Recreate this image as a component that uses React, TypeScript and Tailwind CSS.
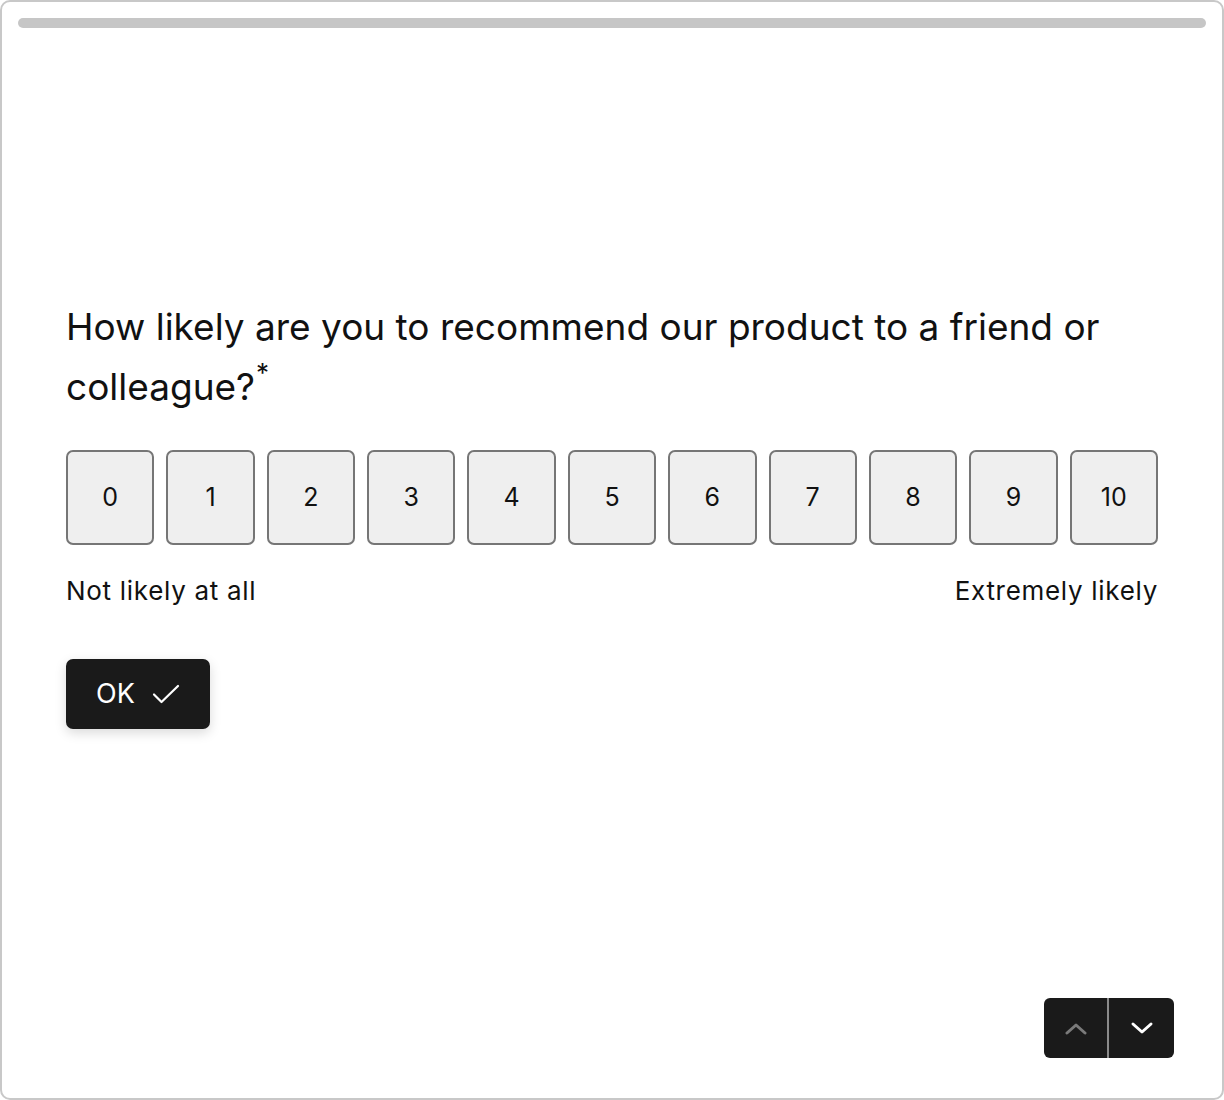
import React from "react";

const scores = [0, 1, 2, 3, 4, 5, 6, 7, 8, 9, 10];

export default function App() {
  return (
    <div
      className="w-[1224px] h-[1100px] bg-white"
      style={{ fontFamily: "Inter, 'Noto Sans', sans-serif" }}
    >
      <div className="h-full border-2 border-[#c8c8c8] rounded-[10px] flex flex-col px-4 pt-4 pb-[40px]">
        <div className="h-[10px] rounded-full bg-[#c6c6c6]" />

        <div className="flex-1 flex flex-col pl-[48px] pr-[48px] pt-[269px]">
          <h1 className="text-[37px] leading-[60px] text-[#111]">
            How likely are you to recommend our product to a friend or colleague?
            <span className="inline-block align-top text-[26px] leading-none relative top-[3px] ml-[1px]">
              *
            </span>
          </h1>

          <div className="mt-[33px] flex gap-3">
            {scores.map((n) => (
              <button
                key={n}
                className="flex-1 h-[95px] rounded-[7px] border-2 border-[#767676] bg-[#efefef] text-[25px] text-[#111] flex items-center justify-center"
              >
                {n}
              </button>
            ))}
          </div>

          <div className="mt-[30px] flex justify-between text-[26px] tracking-[0.7px] text-[#111] leading-[32px]">
            <span>Not likely at all</span>
            <span>Extremely likely</span>
          </div>

          <div className="mt-[52px]">
            <button className="h-[70px] pl-[30px] pr-[30px] rounded-[7px] bg-[#1a1a1a] text-white text-[27px] flex items-center gap-[17px] shadow-[0_4px_12px_rgba(0,0,0,0.15)]">
              OK
              <svg width="28" height="22" viewBox="0 0 28 22" fill="none">
                <path
                  d="M2 11.5 L9.5 19 L26 3"
                  stroke="white"
                  strokeWidth="2.2"
                  strokeLinecap="round"
                  strokeLinejoin="round"
                />
              </svg>
            </button>
          </div>
        </div>

        <div className="flex justify-end pr-[32px]">
          <div className="flex h-[60px] rounded-[6px] bg-[#1a1a1a] overflow-hidden">
            <button className="w-[65px] flex items-center justify-center border-r-2 border-[#8a8a8a]">
              <svg width="24" height="14" viewBox="0 0 24 14" fill="none">
                <path
                  d="M3 12 L12 4 L21 12"
                  stroke="#7a7a7a"
                  strokeWidth="3"
                  strokeLinecap="round"
                  strokeLinejoin="round"
                />
              </svg>
            </button>
            <button className="w-[65px] flex items-center justify-center">
              <svg width="24" height="14" viewBox="0 0 24 14" fill="none">
                <path
                  d="M3 3 L12 11 L21 3"
                  stroke="white"
                  strokeWidth="3"
                  strokeLinecap="round"
                  strokeLinejoin="round"
                />
              </svg>
            </button>
          </div>
        </div>
      </div>
    </div>
  );
}
